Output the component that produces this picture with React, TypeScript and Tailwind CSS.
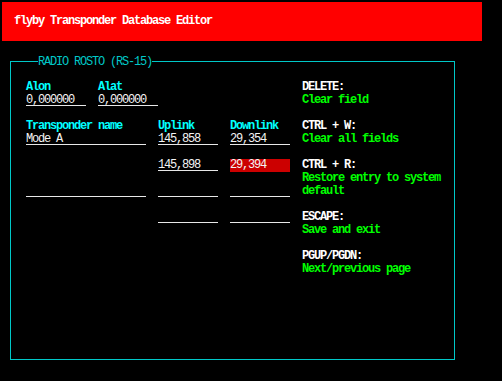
const mono = "font-['Liberation_Mono',monospace] text-[12px] leading-[13px] tracking-[-1.2px]"

type FieldProps = {
  value?: string
  width: string
  active?: boolean
}

const Field = ({ value = "", width, active }: FieldProps) => {
  return (
    <div
      className={`${width} ${
        active ? "h-[13px] bg-[#cc0000] border-b border-[#cc0000]" : "h-[12px] mb-[1px] border-b border-[#e8e8e8]"
      } whitespace-pre text-[#f4f4f4]`}
    >
      {value}
    </div>
  )
}

const Label = ({ children }: { children: string }) => (
  <div className="h-[13px] font-bold text-[#00ffff] whitespace-pre">{children}</div>
)

// name only on every other row, uplink/downlink on every row
const rows = [
  { name: "Mode A", up: "145,858", down: "29,354" },
  { name: null, up: "145,898", down: "29,394", active: true },
  { name: "", up: "", down: "" },
  { name: null, up: "", down: "" },
]

const keys = [
  { key: "DELETE:", text: "Clear field" },
  { key: "CTRL + W:", text: "Clear all fields" },
  { key: "CTRL + R:", text: "Restore entry to system default" },
  { key: "ESCAPE:", text: "Save and exit" },
  { key: "PGUP/PGDN:", text: "Next/previous page" },
]

export default function App() {
  return (
    <div className={`w-[502px] h-[381px] bg-black pt-[2px] overflow-hidden ${mono}`}>
      {/* title bar */}
      <div className="ml-[2px] w-[480px] h-[39px] bg-[#ff0000] flex items-center pl-[12px]">
        <span className="font-bold text-white">flyby Transponder Database Editor</span>
      </div>

      {/* editor panel */}
      <div className="relative ml-[10px] mt-[20px] w-[445px] h-[299px] border border-[#00c8c8] pt-[19px] pl-[15px] flex gap-[12px]">
        <span className="absolute left-[27px] top-[-6px] bg-black text-[#00c8c8] font-normal">RADIO ROSTO (RS-15)</span>

        <div className="w-[264px]">
          <div className="flex gap-[12px]">
            <div>
              <Label>Alon</Label>
              <Field value="0,000000" width="w-[60px]" />
            </div>
            <div>
              <Label>Alat</Label>
              <Field value="0,000000" width="w-[60px]" />
            </div>
          </div>

          <div className="mt-[13px] grid grid-cols-[120px_60px_60px] gap-x-[12px]">
            <Label>Transponder name</Label>
            <Label>Uplink</Label>
            <Label>Downlink</Label>
            {rows.map((r, i) => (
              <div key={i} className="contents">
                <div className={i > 0 ? "pt-[13px]" : ""}>
                  {r.name !== null && <Field value={r.name} width="w-[120px]" />}
                </div>
                <div className={i > 0 ? "pt-[13px]" : ""}>
                  <Field value={r.up} width="w-[60px]" />
                </div>
                <div className={i > 0 ? "pt-[13px]" : ""}>
                  <Field value={r.down} width="w-[60px]" active={r.active} />
                </div>
              </div>
            ))}
          </div>
        </div>

        <div className="w-[150px] font-bold">
          {keys.map((k) => (
            <div key={k.key} className="mb-[13px]">
              <div className="text-white">{k.key}</div>
              <div className="text-[#00ff00]">{k.text}</div>
            </div>
          ))}
        </div>
      </div>
    </div>
  )
}
